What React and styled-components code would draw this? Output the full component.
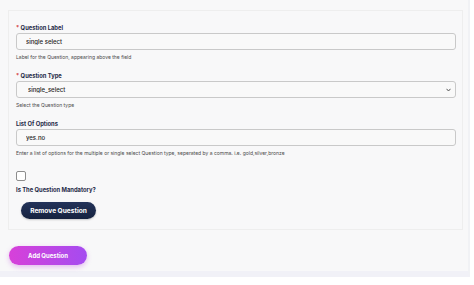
import React, { useState } from "react";
import styled, { createGlobalStyle } from "styled-components";

const GlobalStyle = createGlobalStyle`
  body {
    margin: 0;
    background: #ffffff;
    font-family: Inter, "Liberation Sans", sans-serif;
  }
`;

const App = () => {
  const [label, setLabel] = useState("single select");
  const [type, setType] = useState("single_select");
  const [options, setOptions] = useState("yes.no");
  const [mandatory, setMandatory] = useState(false);

  return (
    <>
      <GlobalStyle />
      <StyledPanel>
        <StyledCard>
          <StyledField>
            <StyledLabel>
              <span className="req">*</span> Question Label
            </StyledLabel>
            <StyledInput
              value={label}
              onChange={(e) => setLabel(e.target.value)}
            />
            <StyledHelp>Label for the Question, appearing above the field</StyledHelp>
          </StyledField>

          <StyledField>
            <StyledLabel>
              <span className="req">*</span> Question Type
            </StyledLabel>
            <StyledSelectWrap>
              <StyledSelect value={type} onChange={(e) => setType(e.target.value)}>
                <option value="single_select">single_select</option>
                <option value="multi_select">multi_select</option>
                <option value="text">text</option>
              </StyledSelect>
              <svg width="5" height="4" viewBox="0 0 5 4" className="chev">
                <path d="M0.5 0.8 L2.5 3 L4.5 0.8" fill="none" stroke="#555" strokeWidth="1" />
              </svg>
            </StyledSelectWrap>
            <StyledHelp>Select the Question type</StyledHelp>
          </StyledField>

          <StyledField>
            <StyledLabel>List Of Options</StyledLabel>
            <StyledInput
              value={options}
              onChange={(e) => setOptions(e.target.value)}
            />
            <StyledHelp>
              Enter a list of options for the multiple or single select Question type, seperated by a comma. i.e. gold,silver,bronze
            </StyledHelp>
          </StyledField>

          <StyledCheckField>
            <StyledCheckbox
              type="checkbox"
              checked={mandatory}
              onChange={(e) => setMandatory(e.target.checked)}
            />
            <StyledLabel>Is The Question Mandatory?</StyledLabel>
          </StyledCheckField>

          <StyledButton variant="dark">Remove Question</StyledButton>
        </StyledCard>

        <StyledButton variant="pink">Add Question</StyledButton>
      </StyledPanel>
    </>
  );
};

export default App;

const StyledPanel = styled.div`
  width: 470px;
  height: 277px;
  box-sizing: border-box;
  background: #f8f8f9;
  padding: 10px 7px 0 8px;
  border-right: 2px solid #f1f2f5;
  border-bottom: 6px solid #f1f1f7;
  display: flex;
  flex-direction: column;
  align-items: flex-start;
  gap: 16px;
`;

const StyledCard = styled.div`
  width: 455px;
  box-sizing: border-box;
  border: 1px solid #eeeeee;
  padding: 12px 6px 10px 7px;
  display: flex;
  flex-direction: column;
  align-items: flex-start;
`;

const StyledField = styled.div`
  width: 100%;
  display: flex;
  flex-direction: column;
  margin-bottom: 9px;
`;

const StyledLabel = styled.div`
  color: #1f2a48;
  font-size: 5.8px;
  font-weight: 700;
  line-height: 9px;
  margin-bottom: 1px;

  .req {
    color: #d43c3c;
  }
`;

const StyledInput = styled.input`
  display: block;
  box-sizing: border-box;
  width: 100%;
  height: 17px;
  margin: 0;
  padding: 0 9px;
  border: 1px solid #c9c9c9;
  border-radius: 3px;
  background: #f9f9f9;
  font-family: Inter, "Liberation Sans", sans-serif;
  font-size: 6px;
  font-weight: 500;
  color: #222;
  outline: none;
`;

const StyledSelectWrap = styled.div`
  position: relative;
  width: 100%;

  .chev {
    position: absolute;
    right: 5px;
    top: 7px;
    pointer-events: none;
  }
`;

const StyledSelect = styled.select`
  display: block;
  appearance: none;
  box-sizing: border-box;
  width: 100%;
  height: 17px;
  margin: 0;
  padding: 0 11px;
  border: 1px solid #c9c9c9;
  border-radius: 3px;
  background: #f9f9f9;
  font-family: Inter, "Liberation Sans", sans-serif;
  font-size: 6px;
  font-weight: 500;
  color: #222;
  outline: none;
`;

const StyledHelp = styled.div`
  color: #4a4a4a;
  font-size: 5px;
  line-height: 9px;
  margin-top: 3px;
`;

const StyledCheckField = styled.div`
  display: flex;
  flex-direction: column;
  align-items: flex-start;
  gap: 4px;
  margin-top: 4px;
  margin-bottom: 7px;
`;

const StyledCheckbox = styled.input`
  appearance: none;
  margin: 0;
  width: 10px;
  height: 10px;
  box-sizing: border-box;
  border: 1px solid #8d8d8d;
  border-radius: 2px;
  background: #fff;
  cursor: pointer;

  &:checked {
    background: #1f2a48;
  }
`;

const StyledButton = styled.button`
  border: none;
  border-radius: 999px;
  color: #fff;
  font-family: Inter, "Liberation Sans", sans-serif;
  font-weight: 700;
  cursor: pointer;
  font-size: ${(p) => (p.variant === "pink" ? "6px" : "6.6px")};
  width: ${(p) => (p.variant === "pink" ? "78px" : "75px")};
  height: ${(p) => (p.variant === "pink" ? "19px" : "17px")};
  margin-left: ${(p) => (p.variant === "pink" ? "1px" : "5px")};
  background: ${(p) =>
    p.variant === "pink"
      ? "linear-gradient(90deg, #d741d9 0%, #a54bf0 100%)"
      : "linear-gradient(180deg, #23335a 0%, #16223f 100%)"};
  box-shadow: ${(p) =>
    p.variant === "pink"
      ? "0 2px 5px rgba(190, 70, 220, 0.35)"
      : "0 1px 2px rgba(0, 0, 0, 0.2)"};
`;
